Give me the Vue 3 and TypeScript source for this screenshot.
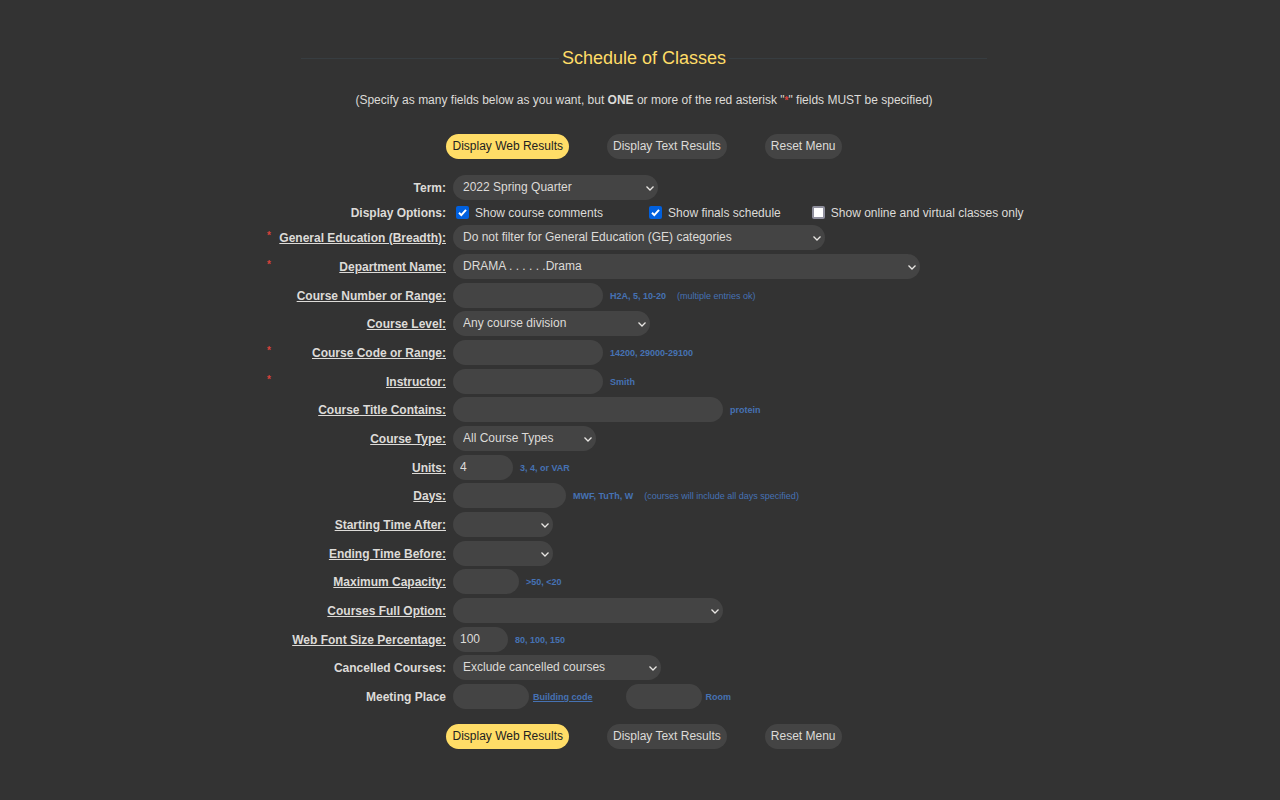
<script setup lang="ts">
import { reactive } from 'vue'

interface Field {
  id: string
  label: string
  link?: boolean
  required?: boolean
  kind: 'select' | 'text' | 'checks' | 'place'
  size?: string
  hint?: string
  note?: string
  options?: string[]
}

const fields: Field[] = [
  { id: 'term', label: 'Term:', kind: 'select', size: 'w205', options: ['2022 Spring Quarter'] },
  { id: 'options', label: 'Display Options:', kind: 'checks' },
  { id: 'breadth', label: 'General Education (Breadth):', link: true, required: true, kind: 'select', size: 'w372', options: ['Do not filter for General Education (GE) categories'] },
  { id: 'dept', label: 'Department Name:', link: true, required: true, kind: 'select', size: 'w467', options: ['DRAMA . . . . . .Drama'] },
  { id: 'number', label: 'Course Number or Range:', link: true, kind: 'text', size: 'w150', hint: 'H2A, 5, 10-20', note: '(multiple entries ok)' },
  { id: 'level', label: 'Course Level:', link: true, kind: 'select', size: 'w197', options: ['Any course division'] },
  { id: 'code', label: 'Course Code or Range:', link: true, required: true, kind: 'text', size: 'w150', hint: '14200, 29000-29100' },
  { id: 'instructor', label: 'Instructor:', link: true, required: true, kind: 'text', size: 'w150', hint: 'Smith' },
  { id: 'title', label: 'Course Title Contains:', link: true, kind: 'text', size: 'w270', hint: 'protein' },
  { id: 'type', label: 'Course Type:', link: true, kind: 'select', size: 'w143', options: ['All Course Types'] },
  { id: 'units', label: 'Units:', link: true, kind: 'text', size: 'w60', hint: '3, 4, or VAR' },
  { id: 'days', label: 'Days:', link: true, kind: 'text', size: 'w113', hint: 'MWF, TuTh, W', note: '(courses will include all days specified)' },
  { id: 'start', label: 'Starting Time After:', link: true, kind: 'select', size: 'w100', options: [''] },
  { id: 'end', label: 'Ending Time Before:', link: true, kind: 'select', size: 'w100', options: [''] },
  { id: 'capacity', label: 'Maximum Capacity:', link: true, kind: 'text', size: 'w66', hint: '>50, <20' },
  { id: 'full', label: 'Courses Full Option:', link: true, kind: 'select', size: 'w270', options: [''] },
  { id: 'fontsize', label: 'Web Font Size Percentage:', link: true, kind: 'text', size: 'w55', hint: '80, 100, 150' },
  { id: 'cancelled', label: 'Cancelled Courses:', kind: 'select', size: 'w208', options: ['Exclude cancelled courses'] },
  { id: 'building', label: 'Meeting Place', kind: 'place' },
]

const values = reactive<Record<string, string>>({ units: '4', fontsize: '100' })
for (const f of fields) {
  if (!(f.id in values)) values[f.id] = f.options?.[0] ?? ''
}
values.room = ''

const checks = reactive([
  { id: 'comments', text: 'Show course comments', on: true },
  { id: 'finals', text: 'Show finals schedule', on: true },
  { id: 'online', text: 'Show online and virtual classes only', on: false },
])

const actions = ['Display Web Results', 'Display Text Results', 'Reset Menu']
</script>

<template>
  <main class="page">
    <h1 class="title">Schedule of Classes</h1>
    <p class="intro">
      (Specify as many fields below as you want, but <b>ONE</b> or more of the red asterisk "<span class="star">*</span>" fields MUST be specified)
    </p>
    <form class="form" @submit.prevent>
      <div class="actions">
        <button v-for="(a, i) in actions" :key="a" type="button" class="btn" :class="{ primary: i === 0 }">{{ a }}</button>
      </div>

      <div class="fields">
        <div v-for="f in fields" :key="f.id" class="row" :class="{ tight: f.id === 'term' || f.id === 'options' }">
          <span class="star">{{ f.required ? '*' : '' }}</span>
          <span v-if="f.kind === 'checks'" class="label">{{ f.label }}</span>
          <label v-else class="label" :for="f.id">
            <a v-if="f.link" href="#">{{ f.label }}</a>
            <template v-else>{{ f.label }}</template>
          </label>

          <div v-if="f.kind === 'checks'" class="checks">
            <label v-for="c in checks" :key="c.id" class="check">
              <span class="box">
                <input v-model="c.on" type="checkbox" />
                <svg v-if="c.on" viewBox="0 0 13 13" aria-hidden="true"><path d="M3 6.8 5.3 9.1 10 3.8" /></svg>
              </span>
              {{ c.text }}
            </label>
          </div>

          <div v-else-if="f.kind === 'select'" class="field">
            <span class="select" :class="f.size">
              <select :id="f.id" v-model="values[f.id]">
                <option v-for="o in f.options" :key="o" :value="o">{{ o }}</option>
              </select>
              <svg viewBox="0 0 10 7" aria-hidden="true"><path d="M1.5 1.5 5 5 8.5 1.5" /></svg>
            </span>
          </div>

          <div v-else-if="f.kind === 'text'" class="field">
            <input :id="f.id" v-model="values[f.id]" type="text" class="text" :class="f.size" />
            <span class="hint">{{ f.hint }}</span>
            <span v-if="f.note" class="note">{{ f.note }}</span>
          </div>

          <div v-else class="field place">
            <input id="building" v-model="values.building" type="text" class="text w76" />
            <a class="hint" href="#">Building code</a>
            <input id="room" v-model="values.room" type="text" class="text w76 room" />
            <label class="hint" for="room">Room</label>
          </div>
        </div>
      </div>

      <div class="actions">
        <button v-for="(a, i) in actions" :key="a" type="button" class="btn" :class="{ primary: i === 0 }">{{ a }}</button>
      </div>
    </form>
  </main>
</template>

<style>
html,
body {
  background: #333333;
}
body {
  margin: 0;
}
</style>

<style scoped>
.page {
  box-sizing: border-box;
  padding: 46px 0 48px 8px;
  color: #dddbd8;
  font: 12px/16px "Liberation Sans", Arial, sans-serif;
}
.title {
  display: flex;
  align-items: center;
  gap: 3px;
  width: 54%;
  margin: 0 auto;
  color: #ffdd67;
  font-size: 18px;
  font-weight: 400;
  line-height: 24px;
  white-space: nowrap;
}
.title::before,
.title::after {
  content: "";
  flex: 1;
  height: 1px;
  background: #373d41;
}
.intro {
  margin: 22px 0 25px;
  text-align: center;
}
.star {
  color: #d8423b;
  font-size: 10px;
  font-weight: 700;
}
.row .star {
  align-self: start;
  line-height: 22px;
}
.actions {
  display: flex;
  justify-content: center;
  gap: 38px;
}
.btn {
  height: 25px;
  padding: 0 6px 1px;
  border: 0;
  border-radius: 13px;
  background: #444444;
  color: #dddbd8;
  font: inherit;
}
.btn.primary {
  background: #ffdd67;
  color: #222222;
}
.fields {
  max-width: 754px;
  margin: 16px auto 15px;
}
.row {
  display: grid;
  grid-template-columns: 12px 167px 1fr;
  align-items: center;
  height: 25px;
  margin-bottom: 4px;
}
.row:nth-child(3n + 2) {
  margin-bottom: 3px;
}
.row.tight {
  margin-bottom: 0;
}
.row:last-child {
  margin-bottom: 0;
}
.label {
  font-weight: 700;
  text-align: right;
  white-space: nowrap;
}
.label a {
  color: inherit;
  text-decoration: underline;
}
.field {
  display: flex;
  align-items: baseline;
  gap: 7px;
  padding-left: 7px;
  white-space: nowrap;
}
.text,
.select select {
  box-sizing: border-box;
  height: 25px;
  margin: 0;
  border: 0;
  border-radius: 13px;
  outline: 0;
  background: #444444;
  color: #dddbd8;
  font: inherit;
}
.text {
  padding: 0 7px 1px;
}
.select {
  position: relative;
  display: block;
}
.select select {
  display: block;
  width: 100%;
  padding: 0 20px 1px 10px;
  appearance: none;
}
.select svg {
  position: absolute;
  top: 10px;
  right: 3px;
  width: 10px;
  height: 7px;
  pointer-events: none;
}
.select path,
.box path {
  fill: none;
  stroke: #e8e6e3;
  stroke-width: 1.3;
}
.hint,
.note {
  color: #4672b3;
  font-size: 9px;
}
.hint {
  font-weight: 700;
}
.note {
  margin-left: 4px;
}
.place {
  gap: 4px;
}
.room {
  margin-left: 29px;
}
.checks {
  display: flex;
  padding-left: 10px;
  white-space: nowrap;
}
.check {
  display: flex;
  align-items: center;
  gap: 6px;
}
.check:nth-child(2) {
  margin-left: 46px;
}
.check:nth-child(3) {
  margin-left: 31px;
}
.box {
  position: relative;
  width: 13px;
  height: 13px;
}
.box input {
  display: block;
  box-sizing: border-box;
  width: 13px;
  height: 13px;
  margin: 0;
  border: 2px solid #8f8f9d;
  border-radius: 2px;
  background: #ffffff;
  appearance: none;
}
.box input:checked {
  border-color: #0060df;
  background: #0060df;
}
.box svg {
  position: absolute;
  inset: 0;
  width: 13px;
  height: 13px;
  pointer-events: none;
}
.box path {
  stroke: #ffffff;
  stroke-width: 2;
}
.w55 { width: 55px; }
.w60 { width: 60px; }
.w66 { width: 66px; }
.w76 { width: 76px; }
.w100 { width: 100px; }
.w113 { width: 113px; }
.w143 { width: 143px; }
.w150 { width: 150px; }
.w197 { width: 197px; }
.w205 { width: 205px; }
.w208 { width: 208px; }
.w270 { width: 270px; }
.w372 { width: 372px; }
.w467 { width: 467px; }
</style>
